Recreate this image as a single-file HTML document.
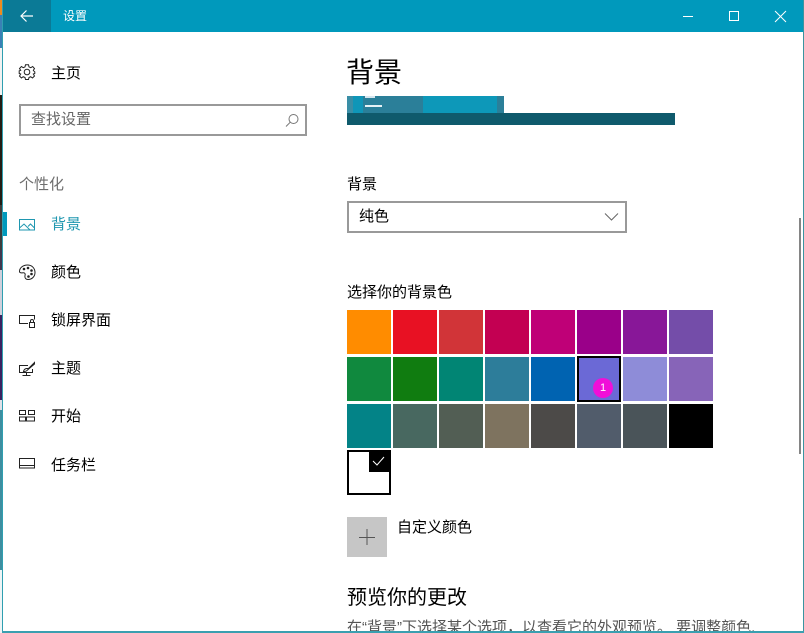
<!DOCTYPE html>
<html lang="zh">
<head>
<meta charset="utf-8">
<style>
html,body{margin:0;padding:0;width:804px;height:633px;overflow:hidden;background:#fff}
body{position:relative;font-family:"Liberation Sans","Noto Sans CJK SC",sans-serif;color:#000}
.a{position:absolute}
.t{position:absolute;white-space:nowrap;line-height:20px;font-size:15px}
.s{position:absolute;width:44px;height:44px}
svg{position:absolute;overflow:visible;fill:none}
</style>
</head>
<body>
<!-- wallpaper strip -->
<div class="a" style="left:0;top:0;width:2px;height:15px;background:#f08a1d"></div>
<div class="a" style="left:0;top:15px;width:2px;height:33px;background:#3a80b5"></div>
<div class="a" style="left:0;top:48px;width:2px;height:47px;background:#f2f2f2"></div>
<div class="a" style="left:0;top:95px;width:2px;height:110px;background:#221c14"></div>
<div class="a" style="left:0;top:205px;width:2px;height:45px;background:#3c3c3c"></div>
<div class="a" style="left:0;top:250px;width:2px;height:20px;background:#40384f"></div>
<div class="a" style="left:0;top:270px;width:2px;height:45px;background:#d0d0dc"></div>
<div class="a" style="left:0;top:315px;width:2px;height:85px;background:#3a2260"></div>
<div class="a" style="left:0;top:400px;width:2px;height:10px;background:#e0e0e8"></div>
<div class="a" style="left:0;top:410px;width:2px;height:160px;background:#3e8ea0"></div>
<div class="a" style="left:0;top:570px;width:2px;height:63px;background:#eef4f6"></div>
<!-- window border -->
<div class="a" style="left:2px;top:0;width:1px;height:633px;background:#2f9fb0"></div>
<div class="a" style="left:803px;top:0;width:1px;height:633px;background:#3a94a0"></div>
<div class="a" style="left:2px;top:631px;width:802px;height:2px;background:#3a9fb0"></div>
<!-- title bar -->
<div class="a" style="left:3px;top:0;width:800px;height:32px;background:#0099bc"></div>
<div class="a" style="left:3px;top:0;width:48px;height:32px;background:#0b7a96"></div>
<svg style="left:0;top:0" width="60" height="32" stroke="#fff" stroke-width="1.2"><path d="M21 16H33M26.5 10.5L21 16L26.5 21.5"/></svg>
<div class="t" style="left:63px;top:6px;font-size:12px;color:#fff">设置</div>
<svg style="left:660px;top:0" width="144" height="32" stroke="#fff" stroke-width="1"><path d="M23 16.5H33"/><rect x="69.5" y="11.5" width="9" height="9"/><path d="M115 11L126 22M126 11L115 22"/></svg>
<!-- sidebar -->
<svg style="left:19px;top:64px" width="17" height="17" stroke="#222" stroke-width="1"><circle cx="8" cy="8" r="2.8"/><path d="M6.5 .8H9.5L10 2.9L11.8 3.7L13.7 2.500L15.500 4.500L14.300 6.300L15 7.200L15.800 7.900V9.500L14.300 10L15.500 12L13.500 14L11.700 12.700L10 13.500L9.500 15.500H6.500L6 13.500L4.200 12.700L2.400 14L.500 12L1.700 10L.2 9.500V6.800L1.700 6.300L.500 4.500L2.400 2.500L4.200 3.700L6 2.900Z"/></svg>
<div class="t" style="left:51px;top:64px">主页</div>
<div class="a" style="left:19px;top:104px;width:284px;height:28px;border:2px solid #999;background:#fff"></div>
<div class="t" style="left:31px;top:110px;color:#666">查找设置</div>
<svg style="left:285px;top:113px" width="15" height="15" stroke="#777" stroke-width="1"><circle cx="8.5" cy="6" r="4.5"/><path d="M5.300 9.200L1 13.500"/></svg>
<div class="t" style="left:19px;top:175px;color:#6e6e6e">个性化</div>
<div class="a" style="left:3px;top:212px;width:4px;height:24px;background:#0099bc"></div>
<svg style="left:19px;top:219px" width="16" height="12" stroke="#1f97b0" stroke-width="1"><rect x=".5" y=".5" width="15" height="10.500"/><path d="M.5 9L5 5L11 11M9 7.500L11.500 5L15.500 9"/></svg>
<div class="t" style="left:51px;top:215px;color:#1f97b0">背景</div>
<svg style="left:19px;top:264px" width="17" height="17" stroke="#222" stroke-width="1"><path d="M8.500 1C4 1 .5 3.800 .5 7.500C.5 9 2.500 9 4 8.800C6 8.600 6.500 10 6 11.500C5.500 13.500 6.500 15.500 9 15.500C13 15.500 16 12.500 16 8.500C16 4.300 13 1 8.500 1Z"/><circle cx="5" cy="5" r=".8" fill="#222"/><circle cx="9" cy="4" r=".8" fill="#222"/><circle cx="12.500" cy="6.500" r=".8" fill="#222"/><circle cx="12.500" cy="10" r=".8" fill="#222"/><circle cx="9.500" cy="12.500" r=".8" fill="#222"/></svg>
<div class="t" style="left:51px;top:263px">颜色</div>
<svg style="left:19px;top:315px" width="17" height="14" stroke="#222" stroke-width="1"><path d="M9 8.500H.5V.5H15.500V4.500"/><rect x="10.500" y="7.500" width="5" height="5"/><path d="M11.500 7.500V6A1.500 1.500 0 0 1 14.500 6V7.500"/></svg>
<div class="t" style="left:51px;top:311px">锁屏界面</div>
<svg style="left:19px;top:362px" width="17" height="15" stroke="#222" stroke-width="1"><path d="M9 3.500H.5V10.500H13.500V7M7.500 10.500V13M3.500 13.500H11.500"/><path d="M15.500 .5L9.500 6.500L7.500 6.500Q5 7 4.500 9.500Q7.500 9.500 8.500 8L15.500 2Z"/></svg>
<div class="t" style="left:51px;top:359px">主题</div>
<svg style="left:19px;top:410px" width="17" height="12" stroke="#222" stroke-width="1"><rect x=".5" y=".5" width="6" height="4"/><rect x="9.500" y=".5" width="6" height="4"/><rect x=".5" y="7" width="6" height="4"/><rect x="7.500" y="7" width="8" height="4"/></svg>
<div class="t" style="left:51px;top:407px">开始</div>
<svg style="left:19px;top:458px" width="17" height="11" stroke="#222" stroke-width="1"><rect x=".5" y=".5" width="15" height="9.500"/><path d="M.5 7.500H15.500"/></svg>
<div class="t" style="left:51px;top:456px">任务栏</div>
<!-- content -->
<div class="t" style="left:346px;top:54px;font-size:28px;line-height:38px">背景</div>
<!-- preview -->
<div class="a" style="left:347px;top:96px;width:157px;height:17px;background:#2b7f99"></div>
<div class="a" style="left:347px;top:96px;width:6px;height:17px;background:#3a8ea6"></div>
<div class="a" style="left:353px;top:96px;width:10px;height:17px;background:#0f96b8"></div>
<div class="a" style="left:423px;top:96px;width:74px;height:17px;background:#0d98b9"></div>
<div class="a" style="left:365px;top:96px;width:10px;height:2px;background:#d6e6ee"></div>
<div class="a" style="left:365px;top:105px;width:17px;height:2px;background:#e6f2f6"></div>
<div class="a" style="left:347px;top:113px;width:328px;height:12px;background:#0f5a6c"></div>
<div class="t" style="left:347px;top:175px">背景</div>
<div class="a" style="left:347px;top:201px;width:276px;height:28px;border:2px solid #999;background:#fff"></div>
<div class="t" style="left:359px;top:207px">纯色</div>
<svg style="left:604px;top:212px" width="15" height="10" stroke="#666" stroke-width="1"><path d="M1 1.500L7.500 8L14 1.500"/></svg>
<div class="t" style="left:347px;top:283px">选择你的背景色</div>
<!-- swatches -->
<div class="s" style="left:347px;top:310px;background:#ff8c00"></div>
<div class="s" style="left:393px;top:310px;background:#e81123"></div>
<div class="s" style="left:439px;top:310px;background:#d13438"></div>
<div class="s" style="left:485px;top:310px;background:#c30052"></div>
<div class="s" style="left:531px;top:310px;background:#bf0077"></div>
<div class="s" style="left:577px;top:310px;background:#9a0089"></div>
<div class="s" style="left:623px;top:310px;background:#881798"></div>
<div class="s" style="left:669px;top:310px;background:#744da9"></div>
<div class="s" style="left:347px;top:357px;background:#10893e"></div>
<div class="s" style="left:393px;top:357px;background:#107c10"></div>
<div class="s" style="left:439px;top:357px;background:#018574"></div>
<div class="s" style="left:485px;top:357px;background:#2d7d9a"></div>
<div class="s" style="left:531px;top:357px;background:#0063b1"></div>
<div class="s" style="left:577px;top:356px;width:40px;height:42px;background:#6b69d6;border:2px solid #000"></div>
<div class="s" style="left:623px;top:357px;background:#8e8cd8"></div>
<div class="s" style="left:669px;top:357px;background:#8764b8"></div>
<div class="s" style="left:347px;top:404px;background:#038387"></div>
<div class="s" style="left:393px;top:404px;background:#486860"></div>
<div class="s" style="left:439px;top:404px;background:#525e54"></div>
<div class="s" style="left:485px;top:404px;background:#7e735f"></div>
<div class="s" style="left:531px;top:404px;background:#4c4a48"></div>
<div class="s" style="left:577px;top:404px;background:#515c6b"></div>
<div class="s" style="left:623px;top:404px;background:#4a5459"></div>
<div class="s" style="left:669px;top:404px;background:#000"></div>
<div class="a" style="left:347px;top:450px;width:40px;height:41px;border:2px solid #000;background:#fff"></div>
<div class="a" style="left:369px;top:450px;width:22px;height:22px;background:#000"></div>
<svg style="left:369px;top:450px" width="22" height="22" stroke="#fff" stroke-width="1"><path d="M4 11L8 15L15 7"/></svg>
<!-- badge -->
<div class="a" style="left:593px;top:378px;width:20px;height:20px;border-radius:50%;background:#f00fd8;color:#fff;font-size:11px;line-height:20px;text-align:center">1</div>
<!-- custom color -->
<div class="a" style="left:347px;top:517px;width:40px;height:40px;background:#c6c6c6"></div>
<svg style="left:347px;top:517px" width="40" height="40" stroke="#555" stroke-width="1"><path d="M20 12V28M12 20.500H28"/></svg>
<div class="t" style="left:397px;top:518px">自定义颜色</div>
<div class="t" style="left:347px;top:584px;font-size:20px;line-height:28px">预览你的更改</div>
<div class="a" style="left:3px;top:617px;width:800px;height:14px;overflow:hidden">
<div class="t" style="left:344px;top:1px;color:#555">在“背景”下选择某个选项，以查看它的外观预览。 要调整颜色,</div>
</div>
<!-- scrollbar -->
<div class="a" style="left:799px;top:218px;width:2px;height:236px;background:#858585"></div>
</body>
</html>
